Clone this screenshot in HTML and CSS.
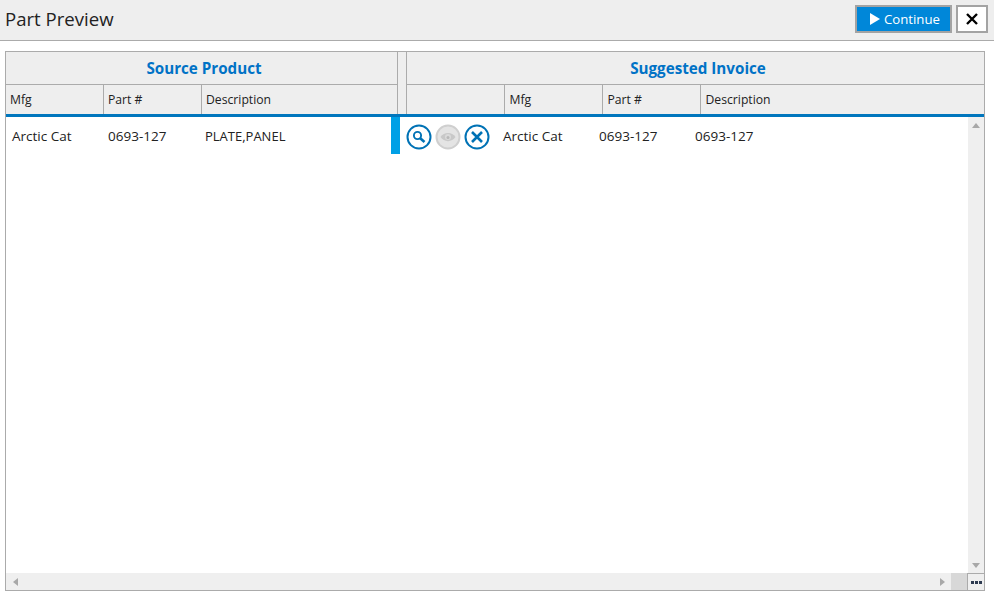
FILE: index.html
```html
<!DOCTYPE html>
<html lang="en">
<head>
<meta charset="utf-8">
<title>Part Preview</title>
<link rel="stylesheet" href="styles.css">
</head>
<body>
<div class="page">
  <header class="topbar">
    <h1 class="title">Part Preview</h1>
    <div class="actions">
      <button class="btn-continue"><svg class="play" viewBox="0 0 10 12" width="10" height="12"><path d="M0 0L10 6L0 12Z" fill="#fff"/></svg><span class="btn-label">Continue</span></button>
      <button class="btn-close" aria-label="Close"><svg viewBox="0 0 12 12" width="12" height="12"><path d="M1 1L11 11M11 1L1 11" stroke="#000" stroke-width="2.4" fill="none"/></svg></button>
    </div>
  </header>
  <main class="main">
    <section class="panel">
      <div class="head">
        <div class="group group-left">
          <div class="group-title">Source Product</div>
          <div class="cols">
            <div class="col col-w">Mfg</div>
            <div class="col col-w">Part #</div>
            <div class="col col-fill">Description</div>
          </div>
        </div>
        <div class="divider"></div>
        <div class="group group-right">
          <div class="group-title">Suggested Invoice</div>
          <div class="cols">
            <div class="col col-w"></div>
            <div class="col col-w">Mfg</div>
            <div class="col col-w">Part #</div>
            <div class="col col-fill">Description</div>
          </div>
        </div>
      </div>
      <div class="body">
        <div class="content">
          <div class="row">
            <div class="cell cell-a">Arctic Cat</div>
            <div class="cell cell-b">0693-127</div>
            <div class="cell cell-c">PLATE,PANEL</div>
            <div class="marker"></div>
            <div class="icons">
              <svg class="icon" viewBox="0 0 26 26" width="26" height="26"><circle cx="13" cy="13" r="11.5" fill="#fff" stroke="#0072b5" stroke-width="2"/><circle cx="11.5" cy="11.5" r="3.6" fill="none" stroke="#0072b5" stroke-width="1.9"/><path d="M14.2 14.2L18.5 18" stroke="#0072b5" stroke-width="2.6" fill="none"/></svg>
              <svg class="icon" viewBox="0 0 26 26" width="26" height="26"><circle cx="13" cy="13" r="11.5" fill="#e4e4e4" stroke="#cfcfcf" stroke-width="2"/><path d="M5.5 13C9 7.5 17 7.5 20.5 13C17 18.5 9 18.5 5.5 13Z" fill="#c8c8c8"/><circle cx="13" cy="13" r="3" fill="#dadada"/><circle cx="13" cy="13.5" r="1.5" fill="#b8b8b8"/></svg>
              <svg class="icon" viewBox="0 0 26 26" width="26" height="26"><circle cx="13" cy="13" r="11.5" fill="#fff" stroke="#0072b5" stroke-width="2"/><path d="M8 8L18 18M18 8L8 18" stroke="#0072b5" stroke-width="2.6" fill="none"/></svg>
            </div>
            <div class="cell cell-d">Arctic Cat</div>
            <div class="cell cell-e">0693-127</div>
            <div class="cell cell-f">0693-127</div>
          </div>
        </div>
        <div class="vscroll">
          <span class="arrow arrow-up"></span>
          <span class="arrow arrow-down"></span>
        </div>
      </div>
      <div class="hscroll">
        <div class="htrack">
          <span class="arrow arrow-left"></span>
          <span class="arrow arrow-right"></span>
        </div>
        <div class="hthumb"></div>
        <div class="corner"><i></i><i></i><i></i></div>
      </div>
    </section>
  </main>
</div>
</body>
</html>
```

FILE: styles.css
```css
* { box-sizing: border-box; }
html, body { margin: 0; height: 100%; }
body { font-family: "Open Sans", "Noto Sans", "Liberation Sans", sans-serif; color: #1e1e1e; background: #fff; overflow: hidden; }
.page { width: 994px; height: 596px; display: flex; flex-direction: column; }
.topbar { height: 41px; flex: none; background: #eeeeee; border-bottom: 1px solid #ababab; display: flex; align-items: flex-start; justify-content: space-between; padding: 5px 6px 0 5px; }
.title { margin: 0; font-size: 18.6px; font-weight: 400; line-height: 28px; color: #222; }
.actions { display: flex; gap: 4px; }
.btn-continue { width: 97px; height: 28px; background: #0087d9; border: 2px solid #a3a3a3; color: #fff; font: 13.2px/1 "Open Sans", sans-serif; display: flex; align-items: center; padding: 0 0 0 13px; gap: 4px; }
.btn-label { padding-top: 2px; }
.btn-close { width: 32px; height: 28px; background: #fff; border: 2px solid #a3a3a3; display: flex; align-items: center; justify-content: center; padding: 0; }
.main { flex: 1; min-height: 0; padding: 10px 9px 5px 5px; }
.panel { height: 100%; border: 1px solid #ababab; display: flex; flex-direction: column; }
.head { display: flex; height: 65px; flex: none; background: #eeeeee; border-bottom: 3px solid #0076bd; }
.group-left { width: 391px; flex: none; }
.divider { width: 10px; flex: none; border-left: 1px solid #ababab; border-right: 1px solid #ababab; }
.group-right { flex: 1; min-width: 0; }
.group-title { height: 33px; border-bottom: 1px solid #ababab; color: #0072c6; font-size: 15.2px; font-weight: 700; line-height: 33px; text-align: center; padding-left: 5px; }
.cols { display: flex; height: 29px; }
.col { font-size: 12.2px; line-height: 29px; padding-left: 4px; color: #222; }
.group-right .col { padding-left: 4.5px; }
.col-w { width: 98px; border-right: 1px solid #ababab; flex: none; }
.col-fill { flex: 1; }
.body { flex: 1; min-height: 0; display: flex; }
.content { flex: 1; min-width: 0; }
.row { height: 37px; display: flex; align-items: flex-start; font-size: 13.5px; }
.cell { flex: none; line-height: 39px; white-space: nowrap; color: #222; }
.cell-a { width: 96px; padding-left: 6px; }
.cell-b { width: 97px; padding-left: 6px; }
.cell-c { width: 192px; padding-left: 6px; font-size: 13px; }
.marker { width: 9px; height: 37px; background: #00a0e6; flex: none; }
.icons { width: 97px; flex: none; display: flex; gap: 3px; padding: 7px 0 0 6px; }
.icon { display: block; flex: none; }
.cell-d { width: 96px; padding-left: 6px; }
.cell-e { width: 96px; padding-left: 6px; }
.cell-f { padding-left: 6px; }
.vscroll { width: 16px; flex: none; background: #efefef; display: flex; flex-direction: column; justify-content: space-between; align-items: center; padding: 6px 0 5px; }
.hscroll { height: 17px; flex: none; display: flex; background: #efefef; }
.htrack { flex: 1; display: flex; justify-content: space-between; align-items: center; padding: 0 6px 0 7px; }
.hthumb { width: 16px; background: #d8d8d8; }
.corner { width: 17px; border-top: 1px solid #ababab; border-left: 1px solid #ababab; background: #efefef; display: flex; align-items: center; justify-content: center; gap: 1px; }
.corner i { width: 3px; height: 3px; background: #2d3a50; display: block; }
.arrow { display: block; width: 0; height: 0; border-style: solid; border-color: transparent; }
.arrow-up { border-width: 0 4px 5px; border-bottom-color: #a8a8a8; }
.arrow-down { border-width: 5px 4px 0; border-top-color: #a8a8a8; }
.arrow-left { border-width: 4px 5px 4px 0; border-right-color: #a8a8a8; }
.arrow-right { border-width: 4px 0 4px 5px; border-left-color: #a8a8a8; }
```
